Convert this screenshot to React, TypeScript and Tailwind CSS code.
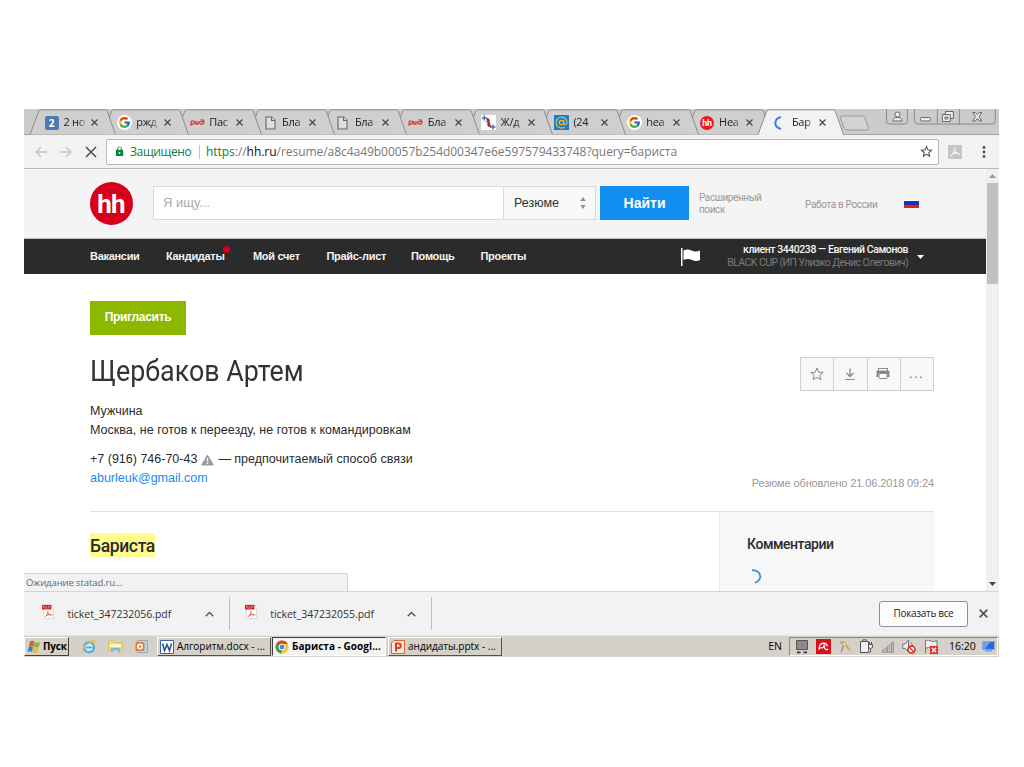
import type { ReactNode } from "react";
import { FcGoogle } from "react-icons/fc";
import { MdLock, MdStarBorder } from "react-icons/md";

function FileIcon() {
  return (
    <svg width="11" height="14" viewBox="0 0 11 14" fill="#dedede" stroke="#666" strokeWidth="1.1">
      <path d="M1 1h5.5L10 4.5V13H1z" />
      <path d="M6.5 1v3.5H10" />
    </svg>
  );
}

function RzdIcon() {
  return (
    <svg width="15" height="7" viewBox="0 0 15 7" fill="none" stroke="#e8392f" strokeWidth="1.3">
      <path d="M.8 6.800L1.400 2.200H3.600Q4.800 2.200 4.500 3.600T3 5H1.200M5.600 2l.2 3h2.600M8 2L7.700 5M9.500 5Q9 2.600 11 2.600H13.800M10.200 5H12.500Q14 5 14 3T12.200.8H10.500" />
    </svg>
  );
}

function CrossIcon() {
  return (
    <svg width="15" height="15" viewBox="0 0 15 15" fill="none">
      <path fill="#fff" d="M0 0h15v15H0z" />
      <path stroke="#3d78bb" strokeWidth="1.500" d="M.8 3h5M3.300.5v5M9.500 12h5M12 9.500v5" />
      <path stroke="#d21f2b" strokeWidth="2.400" d="M5.500 4q2.500 0 2 3.500t2.500 4" />
      <path stroke="#28395e" strokeWidth=".8" d="M5 7l3-2M6.500 10l3-2" />
    </svg>
  );
}

function MailIcon() {
  return (
    <svg width="15" height="15" viewBox="0 0 15 15" fill="none">
      <path fill="#1481c8" d="M0 0h15v15H0z" />
      <circle cx="7.500" cy="7.500" r="2.200" stroke="#f5b83d" strokeWidth="1.200" />
      <path stroke="#f5b83d" strokeWidth="1.100" d="M9.700 5.200v3q.2 1.500 1.500 1.400 1.800-.3 1.800-2.100A5.500 5.500 0 1 0 10.500 12.200" />
    </svg>
  );
}

function HhBadge() {
  return (
    <span className="flex size-[14px] items-center justify-center rounded-full bg-[#f0141e] pt-px font-[Roboto,sans-serif] text-[9px] font-bold leading-none tracking-[-0.1px] text-white">
      hh
    </span>
  );
}

const tabs: { title: string; icon: ReactNode; active?: boolean }[] = [
  {
    title: "2 но",
    icon: (
      <span className="flex size-[14px] items-center justify-center rounded-[2px] bg-[#4a7ab0] text-[10px] font-bold leading-none text-white">2</span>
    ),
  },
  { title: "ржд", icon: <span className="rounded-full bg-white p-px"><FcGoogle size={13} /></span> },
  { title: "Пас", icon: <RzdIcon /> },
  { title: "Бла", icon: <FileIcon /> },
  { title: "Бла", icon: <FileIcon /> },
  { title: "Бла", icon: <RzdIcon /> },
  { title: "Ж/д", icon: <CrossIcon /> },
  { title: "(24", icon: <MailIcon /> },
  { title: "hea", icon: <span className="rounded-full bg-white p-px"><FcGoogle size={13} /></span> },
  { title: "Hea", icon: <HhBadge /> },
  {
    title: "Бар",
    active: true,
    icon: (
      <svg className="-ml-[3px]" width="14" height="14" viewBox="0 0 14 14" fill="none" stroke="#4277e8" strokeWidth="2">
        <path d="M10 1.300A5.600 5.600 0 1 0 10 12.700" />
      </svg>
    ),
  },
];

function Close({ size = 7, color = "#444", width = 1.3 }) {
  return (
    <svg width={size} height={size} viewBox="0 0 8 8" stroke={color} strokeWidth={width} className="shrink-0">
      <path d="M.6.6l6.800 6.800M7.400.6L.6 7.400" />
    </svg>
  );
}

function TabStrip() {
  return (
    <div className="flex h-[26px] border-b border-[#a3a3a3] bg-[#cbcbcb] pl-[6px] font-['Open_Sans','Noto_Sans',sans-serif]">
      {tabs.map((tab, i) => (
        <div
          key={i}
          className="relative h-[25px] w-[72.85px] shrink-0"
          style={{ zIndex: tab.active ? 20 : 11 - i }}
        >
          <svg className="absolute left-0 top-0" width="86" height="26" viewBox="0 0 86 26">
            <path
              d="M0 25.500L8.800 2Q9.200.8 10.500.8H75.500Q76.800.8 77.200 2L85.500 25.500"
              fill={tab.active ? "#f2f2f2" : "#cfcfcf"}
              stroke="#8d8d8d"
            />
            {tab.active && <path d="M1 25.500h84" stroke="#f2f2f2" />}
          </svg>
          <div className="relative flex h-[27px] items-center pl-[14px]">
            <span className="flex w-[15px] shrink-0 items-center justify-center">{tab.icon}</span>
            <span className="ml-[4.500px] w-[22px] shrink-0 whitespace-nowrap text-[11px] tracking-[-0.3px] text-[#222] [mask-image:linear-gradient(to_right,black_65%,#0003)]">
              {tab.title}
            </span>
            <span className="ml-[5.200px] flex"><Close /></span>
          </div>
        </div>
      ))}
      <svg className="ml-[8px] mt-[6px]" width="31" height="16" viewBox="0 0 31 16" fill="#d3d3d3" stroke="#999">
        <path d="M3 1h20q2 0 2.700 1.500l4 11q.3 1.500-1.200 1.500H8q-2 0-2.700-1.500L1.500 3Q1 1 3 1z" />
      </svg>
      <svg className="ml-[15px]" width="114" height="17" viewBox="0 0 114 17" fill="none" stroke="#8a8a8a">
        <path d="M1.500 0v12q0 3 3 3h15q3 0 3-3V0M29.500 0v12q0 3 3 3h75q3 0 3-3V0M52.500 0v15M74.500 0v15" />
        <g stroke="#666" fill="#eee">
          <circle cx="12.500" cy="5.500" r="2.500" />
          <path d="M8 12q0-3.500 4.500-3.500T17 12z" />
          <rect x="35.500" y="8.500" width="10" height="3.500" rx="1" />
          <path d="M60.500 2.500h8v7h-8z" />
          <path d="M57.500 5.500h8v7h-8z" />
          <path d="M60 8h3v2h-3z" />
          <path d="M88 3.500h2.500l2 2 2-2H97L94.200 7.500 97 12h-2.500l-2-2.500-2 2.500H88l2.800-4.500z" />
        </g>
      </svg>
    </div>
  );
}

function Toolbar() {
  return (
    <div className="flex h-[34px] items-center border-b border-[#b9b9b9] bg-[#f2f2f2] pl-[11px]">
      <svg width="63" height="12" viewBox="0 0 63 12" fill="none" stroke="#c4c4c4" strokeWidth="1.300">
        <path d="M12 6H1M6 1L1 6l5 5M25 6h11M31 1l5 5-5 5" />
        <path stroke="#505050" strokeWidth="1.500" d="M51 1l10 10M61 1L51 11" />
      </svg>
      <div className="ml-[8px] flex h-[26px] w-[833px] items-center rounded-[2px] border border-[#b8b8b8] bg-white font-['Open_Sans','Noto_Sans',sans-serif] text-[12px]">
        <MdLock size={11} className="ml-[7px] text-[#0b8043]" />
        <span className="ml-[5px] w-[69px] whitespace-nowrap tracking-[-0.38px] text-[#0b8043]">Защищено</span>
        <span className="h-[14px] w-px bg-[#c8c8c8]" />
        <span className="ml-[6px] whitespace-nowrap tracking-[-0.042px] text-[#777]">
          <span className="text-[#0b8043]">https</span>://<span className="text-[#111]">hh.ru</span>/resume/a8c4a49b00057b254d00347e6e597579433748?query=бариста
        </span>
        <MdStarBorder size={15} className="ml-auto mr-[4px] text-[#444]" />
      </div>
      <svg className="ml-[9px]" width="14" height="14" viewBox="0 0 14 14">
        <path fill="#c5c5c5" d="M0 0h14v14H0z" />
        <path fill="none" stroke="#f5f5f5" strokeWidth="1.200" d="M7 2.500q.5 4-4.500 9M7.500 6.500q1.500 3 4.500 3M4 9q4-1.500 6-1" />
      </svg>
      <svg className="ml-[20px]" width="4" height="14" viewBox="0 0 4 14" fill="#505050">
        <circle cx="2" cy="2.500" r="1.400" />
        <circle cx="2" cy="7" r="1.400" />
        <circle cx="2" cy="11.500" r="1.400" />
      </svg>
    </div>
  );
}

function SiteHeader() {
  return (
    <header className="flex h-[69px] items-center bg-[#f4f4f4] pb-px pl-[66px]">
      <div className="mt-px flex size-[43px] shrink-0 items-center justify-center rounded-full bg-[#d6001c] font-[Roboto,sans-serif] text-[26px] font-bold leading-none tracking-[-0.8px] text-white">
        <span className="-ml-[0.800px] mt-[1px]">hh</span>
      </div>
      <div className="ml-[20px] flex h-[34px] w-[351px] items-center border border-[#d5d9dc] bg-white pl-[9px] text-[13px] text-[#a3abb3]">
        Я ищу...
      </div>
      <div className="flex h-[34px] w-[92px] items-center justify-between border border-l-0 border-[#d5d9dc] bg-[#f8f8f8] pl-[10px] pr-[9px] text-[12.500px] text-[#333]">
        Резюме
        <svg width="6" height="12" viewBox="0 0 6 12" fill="#8c9197">
          <path d="M3 0l2.700 4H.3zM3 12l2.700-4H.3z" />
        </svg>
      </div>
      <div className="ml-[4px] flex h-[34px] w-[89px] items-center justify-center bg-[#118ff0] text-[14px] font-bold text-white">Найти</div>
      <div className="ml-[10px] w-[106px] pt-px font-[Roboto,sans-serif] text-[10px] leading-[12px] tracking-[-0.4px] text-[#999]">
        Расширенный
        <br />
        поиск
      </div>
      <div className="w-[99px] whitespace-nowrap pt-[3px] font-[Roboto,sans-serif] text-[10px] tracking-[-0.35px] text-[#999]">Работа в России</div>
      <div className="mt-[2px] h-[8px] w-[15px] bg-[linear-gradient(to_bottom,#ffffff_12%,#2233a8_12%,#2233a8_60%,#d8281e_60%)]" />
    </header>
  );
}

function SiteNav() {
  return (
    <nav className="flex h-[36px] items-center border-t border-[#bcbcbc] bg-[#2b2b2b] pl-[66px] text-[11px] font-bold tracking-[-0.3px] text-[#f4f4f4]">
      <span className="w-[76px]">Вакансии</span>
      <span className="relative w-[87px]">
        Кандидаты
        <span className="absolute left-[57px] top-[-2px] size-[7px] rounded-full bg-[#d6001c]" />
      </span>
      <span className="w-[73.500px]">Мой счет</span>
      <span className="w-[84.500px]">Прайс-лист</span>
      <span className="w-[69.500px]">Помощь</span>
      <span>Проекты</span>
      <svg className="ml-auto mr-[27px] shrink-0" width="20" height="18" viewBox="0 0 20 18" fill="#fff">
        <path d="M0 0h1.500v18H0zM2.500 2.500q4-2 8 0t8.500 0v9.500q-4 2-8 0t-8.500 0z" />
      </svg>
      <div className="flex w-[180px] flex-col items-end whitespace-nowrap pb-[2px] font-[Roboto,sans-serif] text-[10.500px] font-medium leading-[13px] tracking-[-0.44px]">
        <span>клиент 3440238 — Евгений Самонов</span>
        <span className="font-normal tracking-[-0.57px] text-[#7a7a7a]">BLACK CUP (ИП Улизко Денис Олегович)</span>
      </div>
      <svg className="ml-[9px] mr-[62px]" width="7" height="4" viewBox="0 0 7 4" fill="#fff">
        <path d="M0 0h7L3.500 4z" />
      </svg>
    </nav>
  );
}

function ActionButtons() {
  return (
    <div className="flex h-[34px] w-[134px] divide-x divide-[#cfcfcf] border border-[#cfcfcf] bg-[#f8f8f8] text-[#888] *:flex *:flex-1 *:items-center *:justify-center">
      <span>
        <svg width="14" height="14" viewBox="0 0 14 14" fill="none" stroke="currentColor">
          <path d="M7 1l1.700 4.200 4.500.3-3.500 2.900 1.200 4.400L7 10.400l-3.900 2.400 1.200-4.400L.8 5.500l4.500-.3z" />
        </svg>
      </span>
      <span>
        <svg width="10" height="12" viewBox="0 0 10 12" fill="none" stroke="currentColor">
          <path strokeWidth="1.300" d="M5 .5v8M1.500 5L5 8.500 8.500 5" />
          <path d="M.5 11.500h9" />
        </svg>
      </span>
      <span>
        <svg className="-ml-px" width="14" height="12" viewBox="0 0 14 12">
          <rect x="2.500" y=".5" width="9" height="3" fill="#fff" stroke="#888" />
          <path fill="#888" d="M1.500 2.500h11l1 1V9h-2.300V5.800H2.800V9H.5V3.500z" />
          <rect x="3" y="5.500" width="8" height="5" rx="1" fill="#fff" stroke="#888" />
        </svg>
      </span>
      <span>
        <svg width="12" height="3" viewBox="0 0 12 3" fill="currentColor" className="-ml-px mt-[7px]">
          <path d="M0 .5h1.600v1.600H0zM5 .5h1.600v1.600H5zM10 .5h1.600v1.600H10z" />
        </svg>
      </span>
    </div>
  );
}

function Resume() {
  return (
    <main className="h-[317px] overflow-hidden bg-white pl-[66px] pt-[27px]">
      <div className="flex h-[34px] w-[96px] items-center justify-center bg-[#8cb800] pb-[2px] text-[12px] font-bold tracking-[-0.3px] text-white">
        Пригласить
      </div>
      <div className="mt-[22px] flex w-[844px] justify-between">
        <h1 className="-mt-[3px] origin-left scale-x-[0.925] whitespace-nowrap font-[Roboto,sans-serif] text-[29px] leading-[34px] text-[#333]">
          Щербаков Артем
        </h1>
        <ActionButtons />
      </div>
      <div className="mt-[11px] flex h-[110px] w-[844px] items-start justify-between border-b border-[#e3e3e3] text-[12.500px] leading-[19px] text-[#2b2b2b]">
        <div className="whitespace-nowrap">
          <p>Мужчина</p>
          <p className="tracking-[0.025px]">Москва, не готов к переезду, не готов к командировкам</p>
          <p className="mt-[10px] flex items-center">
            +7 (916) 746-70-43
            <svg className="mx-[4px]" width="13" height="12" viewBox="0 0 13 12">
              <path fill="#999" stroke="#999" strokeLinejoin="round" d="M6.500 1L12.300 11H.7z" />
              <path stroke="#fff" strokeWidth="1.400" d="M6.500 4v3.500M6.500 8.500v1.500" />
            </svg>
            — предпочитаемый способ связи
          </p>
          <p className="text-[#1489f5]">aburleuk@gmail.com</p>
        </div>
        <p className="mt-[72px] whitespace-nowrap text-[11px] tracking-[-0.12px] text-[#999]">Резюме обновлено 21.06.2018 09:24</p>
      </div>
      <div className="flex w-[844px]">
        <div className="w-[629px] pt-[21px]">
          <span className="inline-block h-[24px] bg-[#fffb8c] font-[Roboto,sans-serif] text-[17.500px] font-medium leading-[26px] tracking-[-0.350px] text-[#2b2b2b]">
            Бариста
          </span>
        </div>
        <div className="h-[100px] flex-1 border-l border-[#e8e8e8] bg-[#f7f7f7] pl-[27px] pt-[22px]">
          <h2 className="font-[Roboto,sans-serif] text-[14px] font-medium leading-[20px] tracking-[-0.45px] text-[#2b2b2b]">Комментарии</h2>
          <svg className="ml-[5px] mt-[15px]" width="10" height="15" viewBox="0 0 10 15" fill="none" stroke="#2d8fe0" strokeWidth="1.700">
            <path d="M0 1.200Q8 1.500 8.300 7.500 8 12 3 13.800" />
          </svg>
        </div>
      </div>
    </main>
  );
}

function PageArea() {
  return (
    <div className="relative flex h-[422px]">
      <div className="w-[962px]">
        <SiteHeader />
        <SiteNav />
        <Resume />
      </div>
      <div className="flex w-[13px] flex-col items-center bg-[#f0f0f0]">
        <svg className="mt-[5px]" width="7" height="4" viewBox="0 0 7 4" fill="#999">
          <path d="M0 4h7L3.500 0z" />
        </svg>
        <div className="mt-[5px] h-[101px] w-[11px] bg-[#c1c1c1]" />
        <svg className="mb-[5px] mt-auto" width="7" height="4" viewBox="0 0 7 4" fill="#444">
          <path d="M0 0h7L3.500 4z" />
        </svg>
      </div>
      <div className="absolute bottom-0 left-0 flex h-[18px] w-[324px] items-center rounded-tr-[3px] border border-b-0 border-l-0 border-[#d4d4d4] bg-[#f2f2f2] pl-[2px] pt-px font-['Open_Sans','Noto_Sans',sans-serif] text-[9.500px] tracking-[-0.1px] text-[#666]">
        Ожидание statad.ru...
      </div>
    </div>
  );
}

function Download({ name }: { name: string }) {
  return (
    <div className="flex h-[33px] items-center border-r border-[#bdbdbd] font-['Open_Sans','Noto_Sans',sans-serif] text-[10.500px] text-[#333]">
      <svg className="-mt-[4px]" width="12" height="15" viewBox="0 0 12 15">
        <path fill="#fff" stroke="#dadada" d="M1.500.5h8l2 3v11h-10z" />
        <path fill="#d4261d" d="M0 1h9.500v4.500H0z" />
        <path stroke="#f0a8a4" strokeWidth=".8" fill="none" d="M1.500 4.300V2.500h1.500M4.200 2.500v1.800h1M6.800 4.300V2.500H8.300" />
        <path fill="none" stroke="#e05a50" strokeWidth=".9" d="M6 7q.5 3-3 6M6 9q2 2.500 4.500 2M4 11.500q3-1 5-.8" />
      </svg>
      <span className="ml-[13.500px] mt-[3px] w-[104px] whitespace-nowrap tracking-[-0.03px]">{name}</span>
      <svg className="ml-[33px] mr-[15.200px]" width="9" height="6" viewBox="0 0 9 6" fill="none" stroke="#555" strokeWidth="1.400">
        <path d="M.7 5.200l3.800-3.800 3.800 3.800" />
      </svg>
    </div>
  );
}

function DownloadBar() {
  return (
    <div className="flex h-[44px] items-center border-t border-[#d4d4d4] bg-[#f2f2f2] pl-[18px]">
      <Download name="ticket_347232056.pdf" />
      <span className="w-[15px]" />
      <Download name="ticket_347232055.pdf" />
      <div className="ml-auto flex h-[26px] w-[89px] items-center justify-center rounded-[3px] border border-[#8f8f8f] bg-[#fcfcfc] font-['Open_Sans','Noto_Sans',sans-serif] text-[10px] tracking-[-0.33px] text-[#222]">
        Показать все
      </div>
      <span className="ml-[11px] mr-[11px]"><Close size={9} color="#555" width={1.5} /></span>
    </div>
  );
}

function TaskButton({ icon, title, active }: { icon: ReactNode; title: string; active?: boolean }) {
  return (
    <div
      className={
        active
          ? "flex h-[19px] w-[114px] items-center gap-[3px] whitespace-nowrap border border-b-white border-l-[#404040] border-r-white border-t-[#404040] bg-[#f5f3f0] pl-[2px] text-[10px] font-bold tracking-[0.05px]"
          : "flex h-[19px] w-[114px] items-center gap-[3px] whitespace-nowrap border border-b-[#505050] border-l-white border-r-[#505050] border-t-white bg-[#d5d0c8] pl-[2px] text-[10px]"
      }
    >
      {icon}
      {title}
    </div>
  );
}

function Taskbar() {
  return (
    <div className="flex h-[22px] items-center border-t border-[#e9e6e1] bg-[#d5d0c8] font-['Open_Sans','Noto_Sans',sans-serif] text-black">
      <div className="flex h-[19px] w-[45px] items-center gap-[2px] border border-b-[#404040] border-l-white border-r-[#404040] border-t-white pl-[2px] text-[10px] font-bold tracking-[-0.2px]">
        <svg width="14" height="14" viewBox="0 0 14 14" className="shrink-0">
          <path fill="#e9592b" d="M3 1.500q2-1.500 4.500 0L6.500 6.500Q4 5 1.800 6.500z" />
          <path fill="#7ab83b" d="M8 2q2.500 1.500 5 0L11.700 7q-2.500 1-4.700-.3z" />
          <path fill="#3a83cf" d="M1.600 7q2-1.500 4.500 0L5 12q-2.500-1.500-4.500 0z" />
          <path fill="#f7b92d" d="M6.700 7.300q2.200 1.500 4.800.2L10.300 12.500q-2.500 1.200-4.700-.2z" />
        </svg>
        Пуск
      </div>
      <svg className="ml-[13px]" width="14" height="14" viewBox="0 0 14 14" fill="none">
        <circle cx="7" cy="7.300" r="5" fill="#c8e9f8" stroke="#3eabe2" strokeWidth="1.900" />
        <path stroke="#3eabe2" strokeWidth="1.500" d="M3.500 7.500h7" />
        <path stroke="#edc14d" strokeWidth="1.300" d="M1 12.500Q-.5 8 6 3.500t7-2q.3 1.500-.8 3" />
      </svg>
      <svg className="ml-[12px]" width="15" height="13" viewBox="0 0 15 13">
        <path fill="#eed77b" stroke="#d8c473" d="M.5.5h5l1 2h8v8H.5z" />
        <path fill="#79bde2" d="M3 8h9v4.500h-2V10H5v2.500H3z" />
        <path fill="#fff6c4" d="M2 4h11v3H2z" />
      </svg>
      <svg className="ml-[12px] mr-[9px]" width="13" height="13" viewBox="0 0 13 13">
        <path fill="#b6d3e8" stroke="#8cabc4" d="M2.500.5h10v12h-10z" />
        <rect x=".5" y="2" width="9" height="9" rx="1.500" fill="#ee7c26" />
        <circle cx="5" cy="6.500" r="3" fill="#fff" />
        <path fill="#ee7c26" d="M4 4.800l3 1.700-3 1.700z" />
      </svg>
      <TaskButton
        title="Алгоритм.docx - ..."
        icon={
          <svg width="14" height="14" viewBox="0 0 14 14" className="shrink-0">
            <path fill="#fff" stroke="#3a62a7" d="M.5.5h13v13H.5z" />
            <path fill="none" stroke="#2a5599" strokeWidth="1.600" d="M2.500 3.500L4.500 10.500 7 4.500l2.500 6 2-7" />
          </svg>
        }
      />
      <span className="w-px" />
      <TaskButton
        active
        title="Бариста - Googl..."
        icon={
          <svg width="14" height="14" viewBox="0 0 14 14" className="shrink-0">
            <circle cx="7" cy="7" r="6.500" fill="#f6c52d" />
            <path fill="#dd4535" d="M1.300 3.800A6.500 6.500 0 0 1 12.700 3.900H7L4.300 8.500z" />
            <path fill="#31a350" d="M1.300 3.800L4.300 8.700 7 10.200l-1 3.200A6.500 6.500 0 0 1 1.300 3.800z" />
            <circle cx="7" cy="7" r="3" fill="#4a86e8" stroke="#fff" />
          </svg>
        }
      />
      <span className="w-[2px]" />
      <TaskButton
        title="андидаты.pptx - ..."
        icon={
          <svg width="14" height="14" viewBox="0 0 14 14" className="shrink-0">
            <path fill="#fbe6da" stroke="#d9673f" d="M.5 3L3 .5h10.500v13H.5z" />
            <path fill="none" stroke="#d04423" strokeWidth="2" d="M5 11.500V3.500h2.500q2.200 0 2.200 2.200T7.500 8H5" />
          </svg>
        }
      />
      <span className="ml-auto mr-[7px] text-[10.500px]">EN</span>
      <div className="mr-[1px] flex h-[19px] w-[209px] items-center border border-b-white border-l-[#8c8880] border-r-white border-t-[#8c8880] pl-[5px]">
        <svg width="14" height="14" viewBox="0 0 14 14">
          <path fill="#8b8b8b" stroke="#555" d="M1.500.5h11v9h-11z" />
          <path fill="#333" d="M2 11.500h3.500v1.800H2zM8.500 11.500H12v1.800H8.500z" />
        </svg>
        <svg className="ml-[7px]" width="15" height="15" viewBox="0 0 15 15" fill="none">
          <path fill="#d6101c" d="M0 0h15v15H0z" />
          <path stroke="#fff" strokeWidth="1.200" d="M3 10.500Q3 5 7 4.200q3.500-.5 4.500 3M3 10.500q1.500-2.500 3.500-1.500 1.500-2 3-1.500M8.500 4.200Q7 8 9.500 10.200q1.500 1 2.500-.2" />
        </svg>
        <svg className="ml-[8px]" width="12" height="14" viewBox="0 0 12 14" fill="none">
          <path stroke="#999" strokeWidth="1.500" d="M1 2.500h4.500L2 12.500" />
          <path stroke="#d9a53d" strokeWidth="2" d="M5.500 3.500l5.500 7" />
          <circle cx="5.500" cy="4" r="2" fill="#f2d98a" stroke="#c9a14a" strokeWidth=".7" />
        </svg>
        <svg className="ml-[8px]" width="15" height="15" viewBox="0 0 15 15" fill="#eee" stroke="#555">
          <path d="M1.500 2.500h8v11h-8zM4 .8h3v1.700H4z" />
          <path d="M9.500 5.500h4v3q-2 2-4 0zM10.500 3v2.500M12.500 3v2.500M11.500 9.500v3.500h-3" />
        </svg>
        <svg className="ml-[8px]" width="12" height="12" viewBox="0 0 12 12" fill="#eee" stroke="#888" strokeWidth=".8">
          <path d="M.5 9h1.500v2.500H.5zM3 7h1.500v4.500H3zM5.500 5H7v6.500H5.500zM8 3h1.500v8.500H8zM10.200 1h1.300v10.500h-1.300z" />
        </svg>
        <svg className="ml-[8px]" width="14" height="15" viewBox="0 0 14 15" fill="none">
          <path fill="#eee" stroke="#777" d="M.8 5h2.500L6.500 1v12L3.300 9.500H.8zM8.500 3.500q2 1.500 2 3.500" />
          <circle cx="9.500" cy="10.500" r="3.500" fill="#fff" stroke="#da281d" strokeWidth="1.500" />
          <path stroke="#da281d" strokeWidth="1.300" d="M7 8l5 5" />
        </svg>
        <svg className="ml-[8px]" width="15" height="15" viewBox="0 0 15 15" fill="none">
          <path fill="#eee" stroke="#777" d="M1.500 14V1.500q3-1 5.500.5t6-.5v8q-3 1-5.500-.5t-6 .5" />
          <path fill="#d9302a" d="M6 7h8v8H6z" />
          <path stroke="#fff" strokeWidth="1.400" d="M7.800 8.800l4.400 4.400M12.200 8.800l-4.400 4.400" />
        </svg>
        <span className="ml-[10px] w-[28px] text-[10.500px]">16:20</span>
        <svg className="ml-[5px]" width="13" height="11" viewBox="0 0 13 11">
          <path fill="#2c68d4" stroke="#8da9d6" d="M.5.5h12v8H.5z" />
          <path fill="#6ba0ee" d="M1 1h7L3 8H1zM3 9h7v1.500H3z" />
        </svg>
      </div>
    </div>
  );
}

export default function App() {
  return (
    <div className="h-[767px] w-[1024px] overflow-hidden bg-white pl-[24px] pt-[109px] font-['Liberation_Sans',Arial,sans-serif]">
      <div className="w-[975px] overflow-hidden">
        <TabStrip />
        <Toolbar />
        <PageArea />
        <DownloadBar />
        <Taskbar />
      </div>
    </div>
  );
}
